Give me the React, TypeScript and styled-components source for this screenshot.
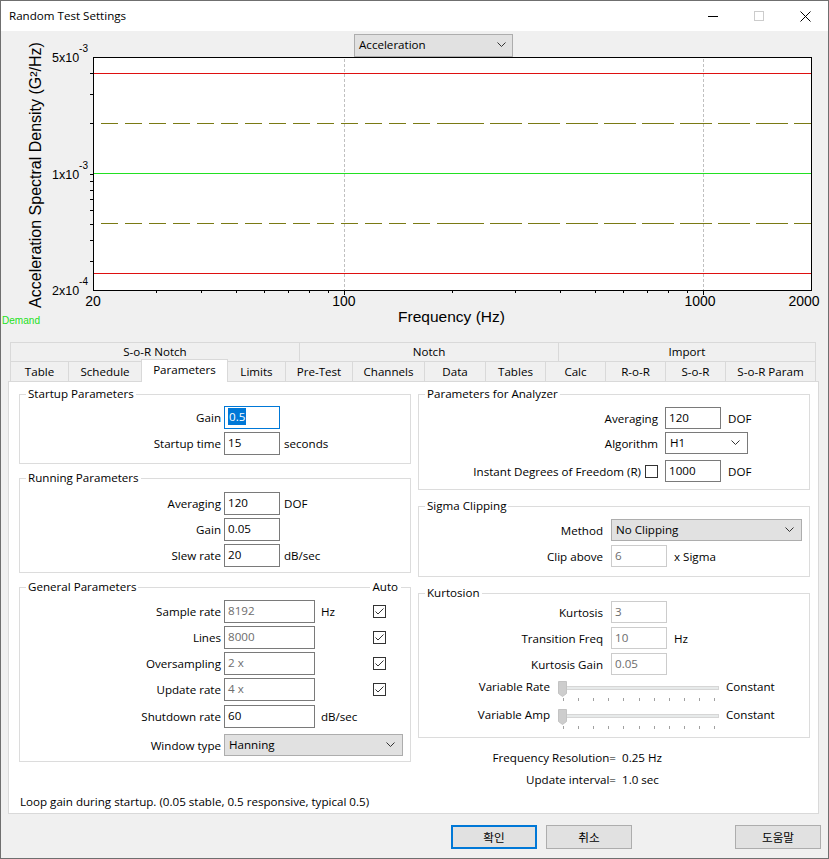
import React from "react";
import styled, { createGlobalStyle } from "styled-components";

const UI_FONT = `"Open Sans", "Noto Sans CJK KR", sans-serif`;
const PLOT_FONT = `"Liberation Sans", Arial, sans-serif`;

const GlobalStyle = createGlobalStyle`
  html, body { margin: 0; padding: 0; background: #f0f0f0; }
  body { font-family: ${UI_FONT}; font-size: 11.6px; color: #000; }
  * { box-sizing: border-box; }
`;

const Window = styled.div`
  width: 829px;
  height: 859px;
  border: 1px solid #6f6f6f;
  background: #f0f0f0;
  display: flex;
  flex-direction: column;
  overflow: hidden;
`;

const TitleBar = styled.div`
  height: 30px;
  background: #fff;
  display: flex;
  align-items: center;
  flex-shrink: 0;
`;

const TitleText = styled.div`
  padding-left: 8px;
  padding-bottom: 1px;
  flex: 1;
`;

const WinButton = styled.div`
  width: 46px;
  height: 30px;
  display: flex;
  align-items: center;
  justify-content: center;
`;

const ChartArea = styled.div`
  position: relative;
  height: 311px;
  flex-shrink: 0;
`;

const ChartSvg = styled.svg`
  display: block;
`;

const ModeSelect = styled.div`
  position: absolute;
  left: 353px;
  top: 3px;
  width: 159px;
  height: 23px;
  background: #e1e1e1;
  border: 1px solid #adadad;
  display: flex;
  align-items: center;
  justify-content: space-between;
  padding: 0 6px 2px 4px;
`;

const TabStrip = styled.div`
  flex-shrink: 0;
  padding-left: 9px;
`;

const TabRow = styled.div<{ $h: number }>`
  display: flex;
  align-items: flex-start;
  height: ${(p) => p.$h}px;
`;

const TabCell = styled.div<{ $w: number; $h: number; $pb: number; $first?: boolean; $active?: boolean }>`
  position: relative;
  width: ${(p) => p.$w + (p.$active ? 1 : 0)}px;
  height: ${(p) => (p.$active ? p.$h + 3 : p.$h)}px;
  margin-top: ${(p) => (p.$active ? -2 : 0)}px;
  margin-left: ${(p) => (p.$active ? -1 : 0)}px;
  z-index: ${(p) => (p.$active ? 2 : 1)};
  background: ${(p) => (p.$active ? "#fff" : "#f0f0f0")};
  border-top: 1px solid #d9d9d9;
  border-right: 1px solid #d9d9d9;
  border-left: ${(p) => (p.$first || p.$active ? "1px solid #d9d9d9" : "none")};
  display: flex;
  align-items: center;
  justify-content: center;
  padding-bottom: ${(p) => (p.$active ? p.$pb + 3 : p.$pb)}px;
  white-space: nowrap;
`;

const Panel = styled.div`
  margin-left: 7px;
  width: 811px;
  height: 433px;
  background: #fff;
  border: 1px solid #d9d9d9;
  display: flex;
  flex-direction: column;
  flex-shrink: 0;
`;

const Columns = styled.div`
  display: grid;
  grid-template-columns: 392px 392px;
  column-gap: 7px;
  padding: 4px 0 0 10px;
`;

const Column = styled.div`
  display: flex;
  flex-direction: column;
`;

const Group = styled.fieldset<{ $mt?: number; $pt: number; $pb: number }>`
  margin: ${(p) => p.$mt ?? 0}px 0 0 0;
  padding: ${(p) => p.$pt}px 0 ${(p) => p.$pb}px 0;
  border: 1px solid #dcdcdc;
  min-width: 0;
`;

const Legend = styled.legend<{ $w?: number }>`
  margin-left: 6px;
  padding: 0 2px;
  line-height: 16px;
  height: 16px;
  ${(p) => (p.$w ? `width: ${p.$w}px; display: flex; align-items: center; padding-right: 3px;` : "")}
`;

const LegendFill = styled.span`
  flex: 1;
  height: 1px;
  background: #dcdcdc;
  margin: 0 2px;
`;

const Row = styled.div<{ $mt?: number; $h?: number }>`
  display: flex;
  align-items: center;
  height: ${(p) => p.$h ?? 23}px;
  margin-top: ${(p) => p.$mt ?? 0}px;
`;

const SliderRow = styled.div<{ $mt?: number }>`
  display: flex;
  align-items: flex-start;
  height: 22px;
  margin-top: ${(p) => p.$mt ?? 0}px;
  line-height: 16px;
`;

const Label = styled.div<{ $w: number; $gap: number }>`
  width: ${(p) => p.$w}px;
  margin-right: ${(p) => p.$gap}px;
  flex-shrink: 0;
  display: flex;
  justify-content: flex-end;
  align-items: center;
  gap: 4px;
  white-space: nowrap;
`;

const TextBox = styled.div<{ $w?: number; $state?: "normal" | "focus" | "auto" | "off" }>`
  width: ${(p) => p.$w ?? 56}px;
  height: 100%;
  flex-shrink: 0;
  background: #fff;
  border: 1px solid
    ${(p) =>
      p.$state === "focus" ? "#0078d7" : p.$state === "off" ? "#cccccc" : "#7a7a7a"};
  color: ${(p) => (p.$state === "auto" || p.$state === "off" ? "#6d6d6d" : "#000")};
  display: flex;
  align-items: center;
  padding: 0 0 2px 3px;
  white-space: nowrap;
`;

const Selected = styled.span`
  background: #0078d7;
  color: #fff;
  line-height: 17px;
  padding: 0 1px;
`;

const Unit = styled.div<{ $gap: number; $w?: number }>`
  margin-left: ${(p) => p.$gap}px;
  ${(p) => (p.$w ? `width: ${p.$w}px;` : "")}
  flex-shrink: 0;
  white-space: nowrap;
`;

const CheckBox = styled.div`
  width: 13px;
  height: 13px;
  border: 1px solid #333;
  background: #fff;
  flex-shrink: 0;
  display: flex;
`;

const Combo = styled.div<{ $w: number; $white?: boolean }>`
  width: ${(p) => p.$w}px;
  height: 100%;
  flex-shrink: 0;
  border: 1px solid ${(p) => (p.$white ? "#7a7a7a" : "#adadad")};
  background: ${(p) => (p.$white ? "#fff" : "#e1e1e1")};
  display: flex;
  align-items: center;
  justify-content: space-between;
  padding: 0 7px 2px 4px;
`;

const InfoRow = styled.div<{ $mt: number }>`
  display: flex;
  line-height: 16px;
  margin-top: ${(p) => p.$mt}px;
`;

const StatusLine = styled.div`
  margin-top: auto;
  padding: 0 0 3px 11px;
  line-height: 16px;
`;

const Footer = styled.div`
  flex: 1;
  display: flex;
  align-items: flex-start;
  padding: 11px 7px 0 450px;
  gap: 9px;
`;

const Button = styled.div<{ $default?: boolean; $push?: boolean }>`
  width: 86px;
  height: 24px;
  background: #e1e1e1;
  border: 1px solid ${(p) => (p.$default ? "#0078d7" : "#adadad")};
  box-shadow: ${(p) => (p.$default ? "inset 0 0 0 1px #0078d7" : "none")};
  display: flex;
  align-items: center;
  justify-content: center;
  padding-bottom: 1px;
  margin-left: ${(p) => (p.$push ? "auto" : "0")};
`;

const Chevron: React.FC = () => (
  <svg width="9" height="5" viewBox="0 0 9 5">
    <polyline points="0.5,0.5 4.5,4.5 8.5,0.5" fill="none" stroke="#333" strokeWidth="1" />
  </svg>
);

const Check: React.FC<{ on?: boolean }> = ({ on }) => (
  <CheckBox>
    {on && (
      <svg width="11" height="11" viewBox="0 0 11 11">
        <polyline points="1.5,5.5 4,8 9.5,2.5" fill="none" stroke="#333" strokeWidth="1" />
      </svg>
    )}
  </CheckBox>
);

const Slider: React.FC = () => {
  const ticks = Array.from({ length: 11 }, (_, i) => 4.7 + i * 15.16);
  return (
    <svg width="161" height="22" viewBox="0 0 161 22">
      <rect x="0.5" y="7.5" width="160" height="3" fill="#e7eaea" stroke="#d6d6d6" />
      {ticks.map((x) => (
        <line key={x} x1={Math.round(x) + 0.5} x2={Math.round(x) + 0.5} y1="19" y2="22" stroke="#a0a0a0" />
      ))}
      <path d="M0.5 2.5 H8.5 V14.5 L4.5 17.5 L0.5 14.5 Z" fill="#cdcdcd" stroke="#c3c3c3" />
    </svg>
  );
};

// plot geometry in page pixels
const X0 = 93;
const X1 = 811;
const Y0 = 57;
const Y1 = 290;
const fx = (f: number) => X0 + (Math.log10(f / 20) / 2) * (X1 - X0);
const fy = (v: number) => Y0 + ((Math.log10(5e-3) - Math.log10(v)) / Math.log10(25)) * (Y1 - Y0);
const px = (v: number) => Math.round(v) + 0.5;

const PsdChart: React.FC = () => {
  const yTicks = [3e-4, 4e-4, 5e-4, 6e-4, 7e-4, 8e-4, 9e-4, 1e-3, 2e-3, 3e-3, 4e-3];
  const xTicks = [30, 40, 50, 60, 70, 80, 90, 100, 200, 300, 400, 500, 600, 700, 800, 900, 1000];
  const yLabels: [number, string, string][] = [
    [Y0, "5x10", "-3"],
    [fy(1e-3), "1x10", "-3"],
    [Y1, "2x10", "-4"],
  ];
  const xLabels: [number, string][] = [
    [X0, "20"],
    [fx(100), "100"],
    [700, "1000"],
    [804, "2000"],
  ];
  const mid = fx(200);
  const dashed = (y: number) => (
    <g key={y} stroke="#7a7a14" strokeWidth="1">
      <line x1={X0 + 1} x2={mid} y1={y} y2={y} strokeDasharray="17 7" strokeDashoffset="-7" />
      <line x1={mid} x2={X1} y1={y} y2={y} strokeDasharray="32 6" />
    </g>
  );
  return (
    <ChartSvg width="827" height="311" viewBox="1 31 827 311">
      <rect x={X0 + 0.5} y={Y0 + 0.5} width={X1 - X0} height={Y1 - Y0} fill="#fff" stroke="#000" />
      {[100, 1000].map((f) => (
        <line key={f} x1={px(fx(f))} x2={px(fx(f))} y1={Y0 + 2} y2={Y1} stroke="#c0c0c0" strokeDasharray="3 2" />
      ))}
      <line x1={X0 + 1} x2={X1} y1={73.5} y2={73.5} stroke="#de1010" />
      <line x1={X0 + 1} x2={X1} y1={273.5} y2={273.5} stroke="#de1010" />
      <line x1={X0 + 1} x2={X1} y1={173.5} y2={173.5} stroke="#22e022" />
      {dashed(123.5)}
      {dashed(223.5)}
      {yTicks.map((v) => (
        <line key={v} x1={X0 - 3} x2={X0 + 0.5} y1={px(fy(v))} y2={px(fy(v))} stroke="#000" />
      ))}
      {xTicks.map((f) => (
        <line
          key={f}
          x1={px(fx(f))}
          x2={px(fx(f))}
          y1={Y1 + 0.5}
          y2={Y1 + (f === 100 || f === 1000 ? 5 : 3)}
          stroke="#000"
        />
      ))}
      <g fontFamily={PLOT_FONT} fill="#000">
        {yLabels.map(([y, base, exp]) => (
          <text key={y} x={88} y={y + 5} textAnchor="end" fontSize="12.5">
            {base}
            <tspan dy="-10" fontSize="10">
              {exp}
            </tspan>
          </text>
        ))}
        {xLabels.map(([x, t]) => (
          <text key={t} x={x} y={306} textAnchor="middle" fontSize="14">
            {t}
          </text>
        ))}
        <text x={451.5} y={322} textAnchor="middle" fontSize="15.5">
          Frequency (Hz)
        </text>
        <text x={41} y={175} textAnchor="middle" fontSize="16" transform="rotate(-90 41 175)">
          Acceleration Spectral Density (G²/Hz)
        </text>
        <text x={2} y={324} fontSize="11" fill="#22e022" textLength="38" lengthAdjust="spacingAndGlyphs">
          Demand
        </text>
      </g>
    </ChartSvg>
  );
};

const topTabs: [string, number][] = [
  ["S-o-R Notch", 290],
  ["Notch", 259],
  ["Import", 257],
];

const mainTabs: [string, number][] = [
  ["Table", 59],
  ["Schedule", 73],
  ["Parameters", 86],
  ["Limits", 58],
  ["Pre-Test", 67],
  ["Channels", 72],
  ["Data", 61],
  ["Tables", 60],
  ["Calc", 60],
  ["R-o-R", 60],
  ["S-o-R", 60],
  ["S-o-R Param", 90],
];

const LW = 201; // left column label width
const RW = 184; // kurtosis / sigma label width

const App: React.FC = () => {
  return (
    <>
      <GlobalStyle />
      <Window>
        <TitleBar>
          <TitleText>Random Test Settings</TitleText>
          <WinButton>
            <svg width="10" height="10" viewBox="0 0 10 10">
              <line x1="0" x2="10" y1="5.5" y2="5.5" stroke="#000" />
            </svg>
          </WinButton>
          <WinButton>
            <svg width="10" height="10" viewBox="0 0 10 10">
              <rect x="0.5" y="0.5" width="9" height="9" fill="none" stroke="#cccccc" />
            </svg>
          </WinButton>
          <WinButton>
            <svg width="11" height="11" viewBox="0 0 11 11">
              <path d="M0.5 0.5 L10.5 10.5 M10.5 0.5 L0.5 10.5" stroke="#000" strokeWidth="1" />
            </svg>
          </WinButton>
        </TitleBar>

        <ChartArea>
          <PsdChart />
          <ModeSelect>
            Acceleration
            <Chevron />
          </ModeSelect>
        </ChartArea>

        <TabStrip>
          <TabRow $h={19}>
            {topTabs.map(([t, w], i) => (
              <TabCell key={t} $w={w} $h={19} $pb={2} $first={i === 0}>
                {t}
              </TabCell>
            ))}
          </TabRow>
          <TabRow $h={20}>
            {mainTabs.map(([t, w], i) => (
              <TabCell key={t} $w={w} $h={20} $pb={0} $first={i === 0} $active={t === "Parameters"}>
                {t}
              </TabCell>
            ))}
          </TabRow>
        </TabStrip>

        <Panel>
          <Columns>
            <Column>
              <Group $pt={4} $pb={8}>
                <Legend>Startup Parameters</Legend>
                <Row>
                  <Label $w={LW} $gap={3}>Gain</Label>
                  <TextBox $state="focus">
                    <Selected>0.5</Selected>
                  </TextBox>
                </Row>
                <Row $mt={3}>
                  <Label $w={LW} $gap={3}>Startup time</Label>
                  <TextBox>15</TextBox>
                  <Unit $gap={4}>seconds</Unit>
                </Row>
              </Group>

              <Group $mt={6} $pt={6} $pb={5}>
                <Legend>Running Parameters</Legend>
                <Row>
                  <Label $w={LW} $gap={3}>Averaging</Label>
                  <TextBox>120</TextBox>
                  <Unit $gap={4}>DOF</Unit>
                </Row>
                <Row $mt={3}>
                  <Label $w={LW} $gap={3}>Gain</Label>
                  <TextBox>0.05</TextBox>
                </Row>
                <Row $mt={3}>
                  <Label $w={LW} $gap={3}>Slew rate</Label>
                  <TextBox>20</TextBox>
                  <Unit $gap={4}>dB/sec</Unit>
                </Row>
              </Group>

              <Group $mt={6} $pt={5} $pb={5}>
                <Legend $w={375}>
                  General Parameters
                  <LegendFill />
                  Auto
                </Legend>
                <Row>
                  <Label $w={LW} $gap={3}>Sample rate</Label>
                  <TextBox $w={91} $state="auto">8192</TextBox>
                  <Unit $gap={6} $w={52}>Hz</Unit>
                  <Check on />
                </Row>
                <Row $mt={3}>
                  <Label $w={LW} $gap={3}>Lines</Label>
                  <TextBox $w={91} $state="auto">8000</TextBox>
                  <Unit $gap={6} $w={52} />
                  <Check on />
                </Row>
                <Row $mt={3}>
                  <Label $w={LW} $gap={3}>Oversampling</Label>
                  <TextBox $w={91} $state="auto">2 x</TextBox>
                  <Unit $gap={6} $w={52} />
                  <Check on />
                </Row>
                <Row $mt={3}>
                  <Label $w={LW} $gap={3}>Update rate</Label>
                  <TextBox $w={91} $state="auto">4 x</TextBox>
                  <Unit $gap={6} $w={52} />
                  <Check on />
                </Row>
                <Row $mt={4}>
                  <Label $w={LW} $gap={3}>Shutdown rate</Label>
                  <TextBox $w={91}>60</TextBox>
                  <Unit $gap={6}>dB/sec</Unit>
                </Row>
                <Row $mt={6} $h={22}>
                  <Label $w={LW} $gap={3}>Window type</Label>
                  <Combo $w={179}>
                    Hanning
                    <Chevron />
                  </Combo>
                </Row>
              </Group>
            </Column>

            <Column>
              <Group $pt={5} $pb={7}>
                <Legend>Parameters for Analyzer</Legend>
                <Row $h={22}>
                  <Label $w={239} $gap={7}>Averaging</Label>
                  <TextBox>120</TextBox>
                  <Unit $gap={7}>DOF</Unit>
                </Row>
                <Row $mt={3} $h={22}>
                  <Label $w={239} $gap={7}>Algorithm</Label>
                  <Combo $w={83} $white>
                    H1
                    <Chevron />
                  </Combo>
                </Row>
                <Row $mt={6} $h={22}>
                  <Label $w={239} $gap={7}>
                    Instant Degrees of Freedom (R)
                    <Check />
                  </Label>
                  <TextBox>1000</TextBox>
                  <Unit $gap={7}>DOF</Unit>
                </Row>
              </Group>

              <Group $mt={8} $pt={5} $pb={9}>
                <Legend>Sigma Clipping</Legend>
                <Row $h={22}>
                  <Label $w={RW} $gap={8}>Method</Label>
                  <Combo $w={191}>
                    No Clipping
                    <Chevron />
                  </Combo>
                </Row>
                <Row $mt={4} $h={22}>
                  <Label $w={RW} $gap={8}>Clip above</Label>
                  <TextBox $state="off">6</TextBox>
                  <Unit $gap={7}>x Sigma</Unit>
                </Row>
              </Group>

              <Group $mt={8} $pt={0} $pb={8}>
                <Legend>Kurtosion</Legend>
                <Row $h={22}>
                  <Label $w={RW} $gap={8}>Kurtosis</Label>
                  <TextBox $state="off">3</TextBox>
                </Row>
                <Row $mt={4} $h={22}>
                  <Label $w={RW} $gap={8}>Transition Freq</Label>
                  <TextBox $state="off">10</TextBox>
                  <Unit $gap={7}>Hz</Unit>
                </Row>
                <Row $mt={4} $h={22}>
                  <Label $w={RW} $gap={8}>Kurtosis Gain</Label>
                  <TextBox $state="off">0.05</TextBox>
                </Row>
                <SliderRow $mt={4}>
                  <Label $w={131} $gap={8}>Variable Rate</Label>
                  <Slider />
                  <Unit $gap={7}>Constant</Unit>
                </SliderRow>
                <SliderRow $mt={6}>
                  <Label $w={131} $gap={8}>Variable Amp</Label>
                  <Slider />
                  <Unit $gap={7}>Constant</Unit>
                </SliderRow>
              </Group>

              <InfoRow $mt={12}>
                <Label $w={198} $gap={6}>Frequency Resolution=</Label>
                0.25 Hz
              </InfoRow>
              <InfoRow $mt={6}>
                <Label $w={198} $gap={6}>Update interval=</Label>
                1.0 sec
              </InfoRow>
            </Column>
          </Columns>
          <StatusLine>Loop gain during startup. (0.05 stable, 0.5 responsive, typical 0.5)</StatusLine>
        </Panel>

        <Footer>
          <Button $default>확인</Button>
          <Button>취소</Button>
          <Button $push>도움말</Button>
        </Footer>
      </Window>
    </>
  );
};

export default App;
